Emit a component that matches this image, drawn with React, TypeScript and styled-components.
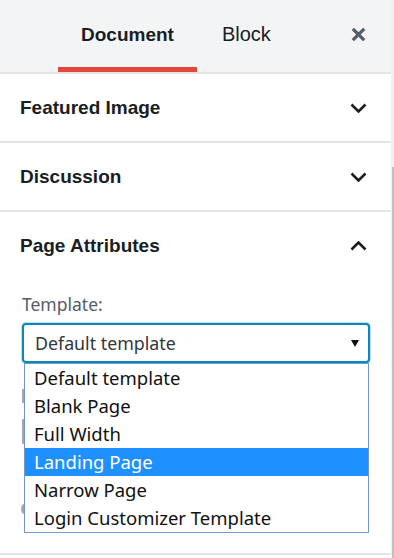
import styled, { createGlobalStyle } from 'styled-components';

const GlobalStyle = createGlobalStyle`
  html, body {
    margin: 0;
    padding: 0;
    background: #ffffff;
  }
  * {
    box-sizing: border-box;
  }
`;

const templates = [
  'Default template',
  'Blank Page',
  'Full Width',
  'Landing Page',
  'Narrow Page',
  'Login Customizer Template',
];

const highlighted = 'Landing Page';

const Chevron = ({ up }: { up?: boolean }) => (
  <svg width="17" height="10" viewBox="0 0 17 10" aria-hidden="true">
    <polyline
      points={up ? '1.5,8.5 8.5,1.5 15.5,8.5' : '1.5,1.5 8.5,8.5 15.5,1.5'}
      fill="none"
      stroke="#191e23"
      strokeWidth="2.6"
    />
  </svg>
);

export default function App() {
  return (
    <>
      <GlobalStyle />
      <Frame>
        <Sidebar>
          <Header>
            <Tab $active>Document</Tab>
            <Tab>Block</Tab>
            <CloseButton aria-label="Close settings">
              <svg width="15" height="15" viewBox="0 0 15 15" aria-hidden="true">
                <path d="M1.8 1.8 L13.2 13.2 M13.2 1.8 L1.8 13.2" stroke="#555d66" strokeWidth="3.2" />
              </svg>
            </CloseButton>
          </Header>

          <Panel>
            <PanelHeader>
              <PanelTitle>Featured Image</PanelTitle>
              <Chevron />
            </PanelHeader>
          </Panel>

          <Panel>
            <PanelHeader>
              <PanelTitle>Discussion</PanelTitle>
              <Chevron />
            </PanelHeader>
          </Panel>

          <Panel>
            <PanelHeader>
              <PanelTitle>Page Attributes</PanelTitle>
              <Chevron up />
            </PanelHeader>
            <PanelBody>
              <FieldLabel>Template:</FieldLabel>
              <SelectWrap>
                <SelectBox>
                  <SelectValue>Default template</SelectValue>
                  <svg width="8" height="7" viewBox="0 0 8 7" aria-hidden="true">
                    <polygon points="0,0 8,0 4,7" fill="#111" />
                  </svg>
                </SelectBox>
                <OptionList>
                  {templates.map((t) => (
                    <OptionItem key={t} $selected={t === highlighted}>
                      {t}
                    </OptionItem>
                  ))}
                </OptionList>
              </SelectWrap>

              {/* edges of the fields that sit under the open list */}
              <PeekEdge $gap={26} $h={14} />
              <PeekEdge $gap={16} $h={25} />
              <PeekEdge $gap={60} $h={10} $round />
            </PanelBody>
          </Panel>
        </Sidebar>

        <ScrollTrack>
          <ScrollThumb />
        </ScrollTrack>
      </Frame>
    </>
  );
}

const Frame = styled.div`
  display: flex;
  width: 394px;
  height: 558px;
  overflow: hidden;
  background: #ffffff;
`;

const Sidebar = styled.div`
  flex: 1;
  display: flex;
  flex-direction: column;
`;

const Header = styled.div`
  display: flex;
  align-items: stretch;
  height: 74px;
  padding-left: 58px;
  background: #f3f4f5;
  border-bottom: 2px solid #e2e4e7;
`;

const Tab = styled.button<{ $active?: boolean }>`
  display: flex;
  align-items: center;
  padding: 0 ${({ $active }) => ($active ? 23 : 25)}px 3px;
  border: none;
  background: transparent;
  font-family: 'Liberation Sans', Arial, sans-serif;
  font-size: ${({ $active }) => ($active ? 19 : 20)}px;
  font-weight: ${({ $active }) => ($active ? 700 : 400)};
  color: #191e23;
  box-shadow: ${({ $active }) => ($active ? 'inset 0 -5px 0 #e1473d' : 'none')};
  cursor: pointer;
`;

const CloseButton = styled.button`
  display: flex;
  align-items: center;
  margin-left: auto;
  margin-right: 25px;
  padding: 0 0 3px;
  border: none;
  background: transparent;
  cursor: pointer;
`;

const Panel = styled.section`
  border-bottom: 2px solid #e2e4e7;
`;

const PanelHeader = styled.div`
  display: flex;
  align-items: center;
  justify-content: space-between;
  height: 67px;
  padding: 0 24px 0 20px;
`;

const PanelTitle = styled.h2`
  margin: 0;
  font-family: 'Liberation Sans', Arial, sans-serif;
  font-size: 19px;
  font-weight: 700;
  color: #191e23;
`;

const PanelBody = styled.div`
  display: flex;
  flex-direction: column;
  align-items: stretch;
  padding: 14px 21px 39px 22px;
  font-family: 'Noto Sans', 'Open Sans', sans-serif;
`;

const FieldLabel = styled.div`
  font-size: 17.5px;
  line-height: 22px;
  color: #555d66;
`;

const SelectWrap = styled.div`
  position: relative;
  margin-top: 8px;
`;

const SelectBox = styled.div`
  display: flex;
  align-items: center;
  justify-content: space-between;
  height: 40px;
  padding: 0 9px 0 11px;
  border: 2px solid #0a89b9;
  border-radius: 4px;
  box-shadow: 0 0 0 1px rgba(10, 137, 185, 0.25);
  background: #ffffff;
`;

const SelectValue = styled.span`
  font-size: 17.8px;
  color: #32373c;
`;

const OptionList = styled.ul`
  position: absolute;
  top: 100%;
  left: 2px;
  right: 1px;
  z-index: 2;
  margin: 0;
  padding: 0;
  list-style: none;
  background: #ffffff;
  border: 1px solid #7497d3;
`;

const OptionItem = styled.li<{ $selected?: boolean }>`
  height: 28px;
  padding-left: 9px;
  font-size: 18.5px;
  line-height: 28px;
  white-space: nowrap;
  color: ${({ $selected }) => ($selected ? '#ffffff' : '#111111')};
  background: ${({ $selected }) => ($selected ? '#1e90ff' : 'transparent')};
`;

const PeekEdge = styled.div<{ $gap: number; $h: number; $round?: boolean }>`
  align-self: flex-start;
  width: ${({ $round }) => ($round ? 6 : 3)}px;
  height: ${({ $h }) => $h}px;
  margin-top: ${({ $gap }) => $gap}px;
  margin-left: ${({ $round }) => ($round ? -1 : 0)}px;
  border-radius: ${({ $round }) => ($round ? '50%' : '1px')};
  background: #a3a8ad;
`;

const ScrollTrack = styled.div`
  display: flex;
  flex-direction: column;
  width: 3px;
  padding-left: 1px;
  background: #f1f1f1;
`;

const ScrollThumb = styled.div`
  flex: 1;
  margin-top: 167px;
  background: #c1c1c1;
`;
